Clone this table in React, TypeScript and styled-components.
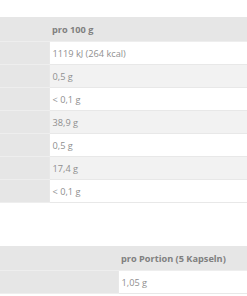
import styled, { createGlobalStyle } from "styled-components";

const GlobalStyle = createGlobalStyle`
    html, body {
        margin: 0;
        padding: 0;
        background: #fff;
    }
    body {
        font-family: "Open Sans", "Liberation Sans", sans-serif;
        overflow: hidden;
    }
`;

type Row = {
    label: string;
    value: string;
};

const nutrition: Row[] = [
    { label: "Brennwert", value: "1119 kJ (264 kcal)" },
    { label: "Fett", value: "0,5 g" },
    { label: "davon gesättigte Fettsäuren", value: "< 0,1 g" },
    { label: "Kohlenhydrate", value: "38,9 g" },
    { label: "davon Zucker", value: "0,5 g" },
    { label: "Eiweiß", value: "17,4 g" },
    { label: "Salz", value: "< 0,1 g" },
];

const ingredients: Row[] = [{ label: "Inhalt", value: "1,05 g" }];

const App = () => {
    return (
        <Page>
            <GlobalStyle />
            <Table $labelWidth={49}>
                <thead>
                    <tr>
                        <LabelCell></LabelCell>
                        <HeadCell>pro 100 g</HeadCell>
                    </tr>
                </thead>
                <tbody>
                    {nutrition.map((row, index) => (
                        <tr key={index}>
                            <LabelCell title={row.label}></LabelCell>
                            <ValueCell $odd={index % 2 === 1}>{row.value}</ValueCell>
                        </tr>
                    ))}
                </tbody>
            </Table>
            <Table $labelWidth={118} $gap={43}>
                <thead>
                    <tr>
                        <LabelCell></LabelCell>
                        <HeadCell>pro Portion (5 Kapseln)</HeadCell>
                    </tr>
                </thead>
                <tbody>
                    {ingredients.map((row, index) => (
                        <tr key={index}>
                            <LabelCell title={row.label}></LabelCell>
                            <ValueCell $odd={index % 2 === 1}>{row.value}</ValueCell>
                        </tr>
                    ))}
                </tbody>
            </Table>
        </Page>
    );
};
export default App;

const Page = styled.div`
    display: flex;
    flex-direction: column;
    padding-top: 17px;
    width: 247px;
    height: 296px;
    box-sizing: border-box;
`;

const Table = styled.table<{ $labelWidth: number; $gap?: number }>`
    width: 100%;
    border-collapse: collapse;
    table-layout: fixed;
    margin-top: ${(p) => p.$gap ?? 0}px;

    td:first-child,
    th:first-child {
        width: ${(p) => p.$labelWidth}px;
    }

    tr {
        height: 23px;
    }
`;

const LabelCell = styled.td`
    background: #e6e6e6;
    border-bottom: 1px solid #eeeeee;
    padding: 0;
`;

const HeadCell = styled.th`
    background: #e6e6e6;
    color: #808080;
    font-size: 9.2px;
    font-weight: 700;
    text-align: left;
    white-space: nowrap;
    padding: 0 3px;
    height: 24px;
    border-bottom: 1px solid #eeeeee;
`;

const ValueCell = styled.td<{ $odd: boolean }>`
    background: ${(p) => (p.$odd ? "#f2f2f2" : "#ffffff")};
    color: #8f8f8f;
    font-size: 9.2px;
    white-space: nowrap;
    padding: 0 3px;
    border-bottom: 1px solid #e8e8e8;
    border-left: 1px solid #e8e8e8;
`;
